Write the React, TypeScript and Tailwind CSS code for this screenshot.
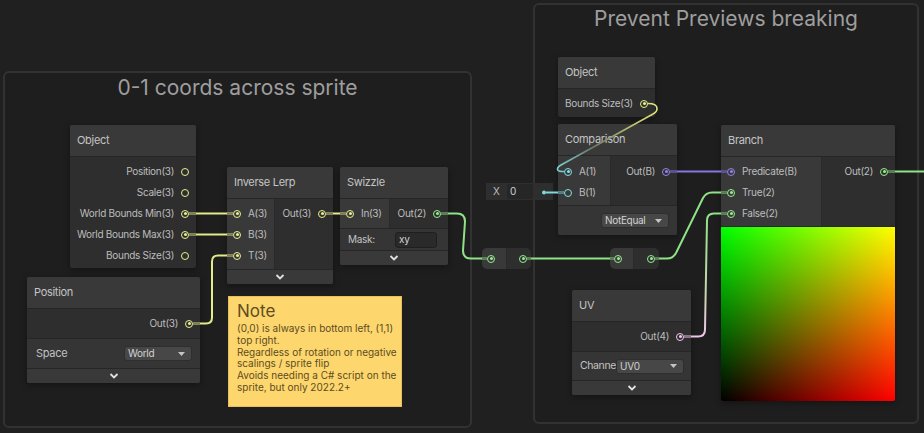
import React from "react";

type PC = "y" | "g" | "c" | "p" | "k";
const RING: Record<PC, string> = {
  y: "border-[#e9ef8e]",
  g: "border-[#97ec8f]",
  c: "border-[#84e0e4]",
  p: "border-[#9483e6]",
  k: "border-[#f6c6ee]",
};
const DOT: Record<PC, string> = {
  y: "bg-[#e9ef8e]",
  g: "bg-[#97ec8f]",
  c: "bg-[#84e0e4]",
  p: "bg-[#9483e6]",
  k: "bg-[#f6c6ee]",
};

function Port({ c, on = true }: { c: PC; on?: boolean }) {
  return (
    <span className={`w-2 h-2 shrink-0 rounded-full border-[1.5px] ${RING[c]} flex items-center justify-center`}>
      {on && <span className={`w-[3px] h-[3px] rounded-full ${DOT[c]}`} />}
    </span>
  );
}

function OutRow({ label, c, on = true, h = "h-[21px]" }: { label: string; c: PC; on?: boolean; h?: string }) {
  return (
    <div className={`${h} flex items-center justify-end gap-[7px] pr-[7px] whitespace-nowrap`}>
      <span>{label}</span>
      <Port c={c} on={on} />
    </div>
  );
}

function InRow({ label, c, on = true }: { label: string; c: PC; on?: boolean }) {
  return (
    <div className="h-[21px] flex items-center gap-[7px] pl-[6px] whitespace-nowrap">
      <Port c={c} on={on} />
      <span>{label}</span>
    </div>
  );
}

function Header({ title }: { title: string }) {
  return (
    <div className="h-[32px] px-[7px] flex items-center text-[11px] tracking-[-0.3px] text-[#c4c4c4] bg-[#393939] border-b border-[#262626]">
      {title}
    </div>
  );
}

function Collapse() {
  return (
    <div className="h-[14px] bg-[#393939] flex items-center justify-center">
      <svg width="10" height="6" viewBox="0 0 10 6">
        <polyline points="1.5,1 5,4.5 8.5,1" fill="none" stroke="#e0e0e0" strokeWidth="1.8" />
      </svg>
    </div>
  );
}

function Dropdown({ value, cls }: { value: string; cls: string }) {
  return (
    <div className={`${cls} h-[15px] rounded-[3px] bg-[#474747] border border-[#2e2e2e] flex items-center justify-between pl-[3px] pr-[6px] text-[10px] text-[#d2d2d2]`}>
      <span>{value}</span>
      <svg width="7" height="4" viewBox="0 0 7 4">
        <polygon points="0,0 7,0 3.5,4" fill="#c4c4c4" />
      </svg>
    </div>
  );
}

function NodeBox({ pos, title, children }: { pos: string; title: string; children: React.ReactNode }) {
  return (
    <div className={`absolute ${pos} rounded-[2px] overflow-hidden bg-[#2e2e2e] text-[10px] tracking-[-0.3px] text-[#bdbdbd] shadow-[0_2px_6px_rgba(0,0,0,0.35)]`}>
      <Header title={title} />
      {children}
    </div>
  );
}

const Y = "#e3ea88", Yd = "#7b7e55";
const G = "#8fe287", Gd = "#587a55";
const P = "#8676de", Pd = "#595190";
const Cy = "#80d9dd", Cyd = "#4d7b7f";
const Kd = "#8a7088";

function W({ d, c, w = 2 }: { d: string; c: string; w?: number }) {
  return <path d={d} stroke={c} strokeWidth={w} fill="none" strokeLinecap="butt" strokeLinejoin="round" />;
}

function Wires() {
  return (
    <svg className="absolute left-0 top-0 pointer-events-none" width="924" height="433" viewBox="0 0 924 433">
      <defs>
        <linearGradient id="uvg" gradientUnits="userSpaceOnUse" x1="0" y1="336" x2="0" y2="214">
          <stop offset="0" stopColor="#f0c3ea" />
          <stop offset="0.35" stopColor="#c8d6b0" />
          <stop offset="1" stopColor={G} />
        </linearGradient>
        <linearGradient id="bsg" gradientUnits="userSpaceOnUse" x1="655" y1="104" x2="560" y2="171">
          <stop offset="0" stopColor="#e3e67c" />
          <stop offset="0.3" stopColor="#b4bc6c" />
          <stop offset="0.65" stopColor="#6c7868" />
          <stop offset="1" stopColor="#7cd2d8" />
        </linearGradient>
      </defs>
      <W d="M189 213.5 H233" c={Y} />
      <W d="M189 213.5 H196" c={Yd} />
      <W d="M227 213.5 H233" c={Yd} />
      <W d="M189 234.5 H233" c={Y} />
      <W d="M189 234.5 H196" c={Yd} />
      <W d="M227 234.5 H233" c={Yd} />
      <W d="M193 323.5 H206 Q212 323.5 212 317.5 V261.5 Q212 255.5 218 255.5 H233" c={Y} />
      <W d="M193 323.5 H200" c={Yd} />
      <W d="M227 255.5 H233" c={Yd} />
      <W d="M326 213.5 H346" c={Y} />
      <W d="M326 213.5 H333" c={Yd} />
      <W d="M340 213.5 H346" c={Yd} />
      <W d="M441 213.5 H457 Q465 213.5 465 221.5 L463 250.5 Q463 258.5 471 258.5 H487" c={G} />
      <W d="M441 213.5 H448" c={Gd} />
      <W d="M482 258.5 H487" c={Gd} />
      <W d="M527 258.5 H614" c={G} />
      <W d="M527 258.5 H531" c={Gd} />
      <W d="M610 258.5 H614" c={Gd} />
      <W d="M655 258.5 H667 Q673 258.5 676 253 L703 198 Q706 192.5 712 192.5 H727" c={G} />
      <W d="M655 258.5 H659" c={Gd} />
      <W d="M721 192.5 H727" c={Gd} />
      <W d="M684 336.5 H698 Q705 336.5 705 329.5 L707 220.5 Q707 213.5 714 213.5 H727" c="url(#uvg)" />
      <W d="M684 336.5 H691" c={Kd} />
      <W d="M721 213.5 H727" c={Gd} />
      <W d="M670 171.5 H727" c={P} />
      <W d="M670 171.5 H677" c={Pd} />
      <W d="M721 171.5 H727" c={Pd} />
      <W d="M888 171.5 H924" c={G} />
      <W d="M888 171.5 H895" c={Gd} />
      <W d="M546 192.5 H564" c={Cy} />
      <W d="M558 192.5 H564" c={Cyd} />
      <W d="M648 103.5 Q657 103.5 657 108.5 Q657 112 653 114 L561 165 Q556 168 558 170.5 Q559 171.5 564 171.5" c="url(#bsg)" w={1.6} />
      <circle cx="544" cy="192.5" r="2" fill={Cy} />
    </svg>
  );
}

export default function App() {
  return (
    <div
      className="relative w-[924px] h-[433px] overflow-hidden bg-[#202020] select-none"
      style={{ fontFamily: "Inter, 'Noto Sans', sans-serif" }}
    >
      {/* Groups */}
      <div className="absolute left-[3px] top-[71px] w-[469px] h-[357px] rounded-[6px] border-2 border-[#323232] bg-[#1e1e1e] flex justify-center">
        <div className="pt-[2px] text-[21px] leading-[26px] text-[#9e9e9e]">0-1 coords across sprite</div>
      </div>
      <div className="absolute left-[533px] top-[3px] w-[386px] h-[421px] rounded-[6px] border-2 border-[#323232] bg-[#1e1e1e] flex justify-center">
        <div className="pt-[1px] text-[21px] leading-[26px] text-[#9e9e9e]">Prevent Previews breaking</div>
      </div>

      {/* Object (left) */}
      <NodeBox pos="left-[70px] top-[125px] w-[126px]" title="Object">
        <div className="pt-[4px] pb-[2px]">
          <OutRow label="Position(3)" c="y" on={false} />
          <OutRow label="Scale(3)" c="y" on={false} />
          <OutRow label="World Bounds Min(3)" c="y" />
          <OutRow label="World Bounds Max(3)" c="y" />
          <OutRow label="Bounds Size(3)" c="y" on={false} />
        </div>
      </NodeBox>

      {/* Inverse Lerp */}
      <NodeBox pos="left-[227px] top-[167px] w-[106px]" title="Inverse Lerp">
        <div className="flex">
          <div className="w-[48px] bg-[#393939] pt-[4px] pb-[3px] border-r border-[#2a2a2a]">
            <InRow label="A(3)" c="y" />
            <InRow label="B(3)" c="y" />
            <InRow label="T(3)" c="y" />
          </div>
          <div className="flex-1 pt-[4px]">
            <OutRow label="Out(3)" c="y" />
          </div>
        </div>
        <div className="border-t border-[#262626]">
          <Collapse />
        </div>
      </NodeBox>

      {/* Swizzle */}
      <NodeBox pos="left-[340px] top-[167px] w-[108px]" title="Swizzle">
        <div className="flex border-b border-[#262626]">
          <div className="w-[50px] bg-[#393939] pt-[4px] pb-[4px] border-r border-[#2a2a2a]">
            <InRow label="In(3)" c="y" />
          </div>
          <div className="flex-1 pt-[4px]">
            <OutRow label="Out(2)" c="g" />
          </div>
        </div>
        <div className="h-[22px] bg-[#353535] flex items-center pl-[8px] border-b border-[#262626]">
          <span className="w-[47px] text-[#c2c2c2]">Mask:</span>
          <div className="w-[42px] h-[16px] rounded-[3px] bg-[#2a2a2a] border border-[#1f1f1f] flex items-center pl-[3px] text-[#d2d2d2]">
            xy
          </div>
        </div>
        <Collapse />
      </NodeBox>

      {/* Position */}
      <NodeBox pos="left-[27px] top-[277px] w-[173px]" title="Position">
        <div className="border-b border-[#262626]">
          <OutRow label="Out(3)" c="y" h="h-[29px]" />
        </div>
        <div className="h-[30px] bg-[#353535] flex items-center pl-[9px] border-b border-[#262626]">
          <span className="w-[88px] text-[#c2c2c2] text-[11px]">Space</span>
          <Dropdown value="World" cls="w-[68px]" />
        </div>
        <Collapse />
      </NodeBox>

      {/* Note */}
      <div className="absolute left-[228px] top-[296px] w-[174px] h-[111px] bg-[#fdd66e] border border-[#e6c060] pl-[8px] pr-[4px] pt-[2px] text-[#5c4d22]">
        <div className="text-[17px] leading-[24px]">Note</div>
        <div className="text-[10px] leading-[11.8px]">
          (0,0) is always in bottom left, (1,1) top right.
          <br />
          Regardless of rotation or negative scalings / sprite flip
          <br />
          Avoids needing a C# script on the sprite, but only 2022.2+
        </div>
      </div>

      {/* Redirect nodes */}
      <div className="absolute left-[482px] top-[248px] w-[49px] h-[21px] rounded-[5px] overflow-hidden flex">
        <div className="w-[25px] bg-[#393939] flex items-center pl-[5px] border-r border-[#2a2a2a]">
          <Port c="g" />
        </div>
        <div className="flex-1 bg-[#2e2e2e] flex items-center justify-end pr-[4px]">
          <Port c="g" />
        </div>
      </div>
      <div className="absolute left-[610px] top-[248px] w-[49px] h-[21px] rounded-[5px] overflow-hidden flex">
        <div className="w-[24px] bg-[#393939] flex items-center pl-[4px] border-r border-[#2a2a2a]">
          <Port c="g" />
        </div>
        <div className="flex-1 bg-[#2e2e2e] flex items-center justify-end pr-[4px]">
          <Port c="g" />
        </div>
      </div>

      {/* Object (right) */}
      <NodeBox pos="left-[558px] top-[57px] w-[97px]" title="Object">
        <div className="pt-[4px] pb-[3px]">
          <div className="h-[21px] flex items-center justify-between pl-[7px] pr-[7px] whitespace-nowrap">
            <span>Bounds Size(3)</span>
            <Port c="y" />
          </div>
        </div>
      </NodeBox>

      {/* inline value X 0 */}
      <div className="absolute left-[486px] top-[183px] w-[67px] h-[17px] bg-[#2e2e2e] flex items-center text-[10px] text-[#bcbcbc]">
        <span className="w-[21px] text-center">X</span>
        <div className="w-[26px] h-[15px] bg-[#262626] rounded-[2px] flex items-center pl-[3px] text-[#d0d0d0]">0</div>
      </div>

      {/* Comparison */}
      <NodeBox pos="left-[558px] top-[124px] w-[119px]" title="Comparison">
        <div className="flex border-b border-[#262626]">
          <div className="w-[53px] bg-[#393939] pt-[5px] pb-[2px] border-r border-[#2a2a2a]">
            <InRow label="A(1)" c="c" />
            <InRow label="B(1)" c="c" on={false} />
          </div>
          <div className="flex-1 pt-[5px]">
            <OutRow label="Out(B)" c="p" />
          </div>
        </div>
        <div className="h-[29px] bg-[#353535] flex items-center justify-end pr-[8px]">
          <Dropdown value="NotEqual" cls="w-[68px]" />
        </div>
      </NodeBox>

      {/* Branch */}
      <NodeBox pos="left-[721px] top-[125px] w-[174px]" title="Branch">
        <div className="flex border-b border-[#262626]">
          <div className="w-[101px] bg-[#393939] pt-[4px] pb-[2px] border-r border-[#2a2a2a]">
            <InRow label="Predicate(B)" c="p" />
            <InRow label="True(2)" c="g" />
            <InRow label="False(2)" c="g" />
          </div>
          <div className="flex-1 pt-[4px]">
            <OutRow label="Out(2)" c="g" />
          </div>
        </div>
        <div className="h-[174px] bg-[linear-gradient(to_right,#000000,#ff0000),linear-gradient(to_bottom,#00ff00,#000000)] bg-blend-screen" />
      </NodeBox>

      {/* UV */}
      <NodeBox pos="left-[572px] top-[290px] w-[119px]" title="UV">
        <div className="border-b border-[#262626]">
          <OutRow label="Out(4)" c="k" h="h-[29px]" />
        </div>
        <div className="h-[29px] bg-[#353535] flex items-center pl-[8px] border-b border-[#262626]">
          <span className="w-[36px] shrink-0 whitespace-nowrap text-[#c2c2c2] text-[10.5px] tracking-[-0.4px]">Channe</span>
          <Dropdown value="UV0" cls="w-[68px]" />
        </div>
        <Collapse />
      </NodeBox>

      <Wires />
    </div>
  );
}
